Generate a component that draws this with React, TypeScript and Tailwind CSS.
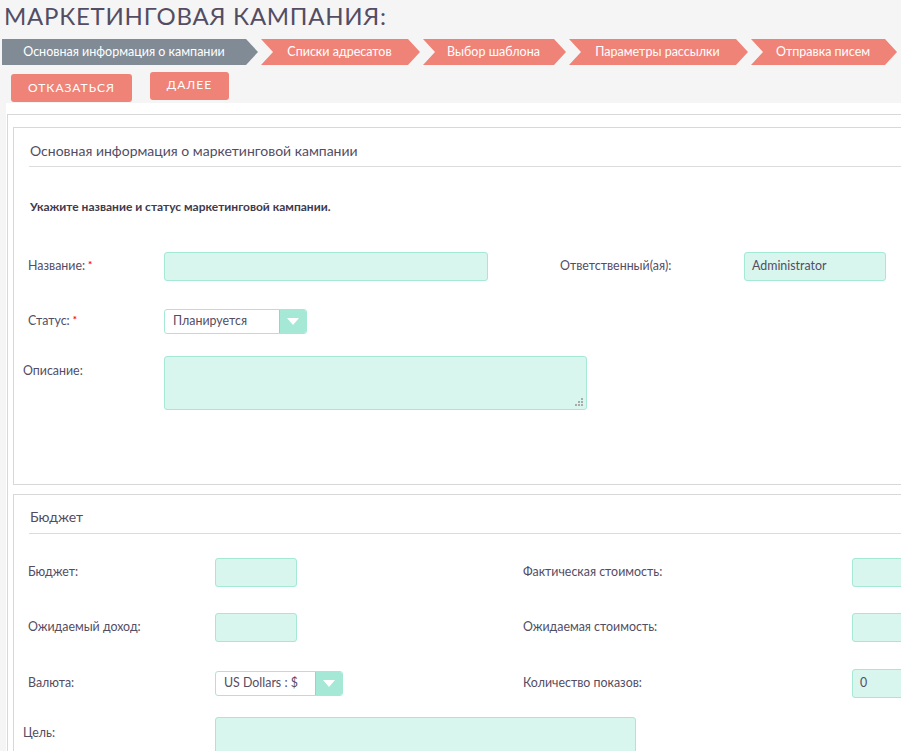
import React from 'react';

// шаги мастера кампании
const steps = [
  { label: 'Основная информация о кампании', w: 'w-[256px]', active: true },
  { label: 'Списки адресатов', w: 'w-[159px]' },
  { label: 'Выбор шаблона', w: 'w-[143px]' },
  { label: 'Параметры рассылки', w: 'w-[179px]' },
  { label: 'Отправка писем', w: 'w-[146px]' },
];

function Star() {
  return <span className="text-[#ff0000] text-[10px] align-top ml-[3px] font-bold">*</span>;
}

function Input({ w, value }: { w: string; value?: string }) {
  return (
    <div
      className={`${w} h-[29px] shrink-0 rounded-[3px] border border-[#a5e8d6] bg-[#d8f5ee] px-[7px] flex items-center text-[12.4px] text-[#534d64]`}
    >
      {value}
    </div>
  );
}

function Select({ w, value }: { w: string; value: string }) {
  return (
    <div className={`${w} h-[25px] shrink-0 flex rounded-[3px] border border-[#a5e8d6] bg-white overflow-hidden`}>
      <div className="flex-1 flex items-center pl-[8px] text-[12.4px] text-[#534d64]">{value}</div>
      <div className="w-[27px] bg-[#a5e8d6] border-l border-[#8fd9c4] flex items-center justify-center">
        <svg width="12" height="8" viewBox="0 0 12 8">
          <path d="M0 0 L12 0 L6 7 Z" fill="#fff" />
        </svg>
      </div>
    </div>
  );
}

function Textarea({ w, h }: { w: string; h: string }) {
  return (
    <div className={`${w} ${h} shrink-0 relative rounded-[3px] border border-[#a5e8d6] bg-[#d8f5ee]`}>
      <svg className="absolute right-[3px] bottom-[3px]" width="8" height="8" viewBox="0 0 8 8">
        <rect x="6" y="0" width="2" height="2" fill="#aaa" />
        <rect x="3" y="3" width="2" height="2" fill="#aaa" />
        <rect x="6" y="3" width="2" height="2" fill="#aaa" />
        <rect x="0" y="6" width="2" height="2" fill="#aaa" />
        <rect x="3" y="6" width="2" height="2" fill="#aaa" />
        <rect x="6" y="6" width="2" height="2" fill="#aaa" />
      </svg>
    </div>
  );
}

export default function App() {
  return (
    <div className="w-[901px] h-[751px] overflow-hidden bg-[#f5f5f5] font-['Lato','Noto_Sans',sans-serif] text-[#534d64]">
      {/* заголовок */}
      <h1 className="pl-[4px] pt-[2px] h-[39px] text-[24px] leading-[28px] tracking-[0.75px] font-normal uppercase text-[#534d64]">
        Маркетинговая кампания:
      </h1>

      {/* шаги */}
      <div className="flex gap-[3px] pl-[2px] h-[26px]">
        {steps.map((s, i) => (
          <div
            key={s.label}
            className={`${s.w} h-[26px] shrink-0 flex items-center justify-center text-[12.5px] text-white ${
              s.active ? 'bg-[#808b96] pr-[12px]' : 'bg-[#f08377] pl-[10px] pr-[12px]'
            } ${
              i === 0
                ? '[clip-path:polygon(0_0,calc(100%_-_12px)_0,100%_50%,calc(100%_-_12px)_100%,0_100%)]'
                : '[clip-path:polygon(0_0,calc(100%_-_12px)_0,100%_50%,calc(100%_-_12px)_100%,0_100%,12px_50%)]'
            }`}
          >
            {s.label}
          </div>
        ))}
      </div>

      {/* кнопки */}
      <div className="flex items-start h-[38px] pt-[7px] pl-[11px]">
        <button className="mt-[2px] w-[121px] h-[28px] rounded-[3px] bg-[#f08377] text-white text-[12px] tracking-[1px] uppercase">
          Отказаться
        </button>
        <button className="ml-[18px] w-[79px] h-[28px] rounded-[3px] bg-[#f08377] text-white text-[12px] tracking-[1px] uppercase pb-[2px]">
          Далее
        </button>
      </div>

      {/* содержимое */}
      <div className="ml-[6px] w-[1000px] bg-white pt-[11px] pl-[1px]">
        <div className="border-l border-t border-[#d8d8d8] pl-[5px] pt-[12px]">
          {/* панель 1 */}
          <div className="border border-[#d8d8d8] pl-[15px] h-[358px]">
            <div className="pl-[1px] pt-[13px] pb-[5px] border-b border-[#dcdcdc] text-[14px] leading-[20px]">
              Основная информация о маркетинговой кампании
            </div>
            <div className="pl-[1px] mt-[32px] text-[12px] leading-[16px] font-bold text-[#3f3a4d]">
              Укажите название и статус маркетинговой кампании.
            </div>

            <div className="mt-[37px] flex items-center text-[12.4px]">
              <div className="w-[136px] -ml-[1px]">
                Название:
                <Star />
              </div>
              <Input w="w-[324px]" />
              <div className="w-[72px]" />
              <div className="w-[184px]">Ответственный(ая):</div>
              <Input w="w-[142px]" value="Administrator" />
            </div>

            <div className="mt-[28px] flex items-center text-[12.4px]">
              <div className="w-[136px] -ml-[1px]">
                Статус:
                <Star />
              </div>
              <Select w="w-[143px]" value="Планируется" />
            </div>

            <div className="mt-[22px] flex items-start text-[12.4px]">
              <div className="w-[141px] -ml-[6px] pt-[6px]">Описание:</div>
              <Textarea w="w-[423px]" h="h-[54px]" />
            </div>
          </div>

          {/* панель 2 */}
          <div className="mt-[9px] border border-[#d8d8d8] pl-[15px] h-[400px]">
            <div className="pl-[1px] pt-[12px] pb-[6px] border-b border-[#dcdcdc] text-[14px] leading-[20px]">Бюджет</div>

            <div className="mt-[24px] flex items-center text-[12.4px]">
              <div className="w-[187px] -ml-[1px]">Бюджет:</div>
              <Input w="w-[82px]" />
              <div className="w-[226px]" />
              <div className="w-[329px]">Фактическая стоимость:</div>
              <Input w="w-[82px]" />
            </div>

            <div className="mt-[26px] flex items-center text-[12.4px]">
              <div className="w-[187px] -ml-[1px]">Ожидаемый доход:</div>
              <Input w="w-[82px]" />
              <div className="w-[226px]" />
              <div className="w-[329px]">Ожидаемая стоимость:</div>
              <Input w="w-[82px]" />
            </div>

            <div className="mt-[27px] flex items-center text-[12.4px]">
              <div className="w-[187px] -ml-[1px]">Валюта:</div>
              <Select w="w-[128px]" value="US Dollars : $" />
              <div className="w-[180px]" />
              <div className="w-[329px]">Количество показов:</div>
              <Input w="w-[82px]" value="0" />
            </div>

            <div className="mt-[19px] flex items-start text-[12.4px]">
              <div className="w-[192px] -ml-[6px] pt-[7px]">Цель:</div>
              <Textarea w="w-[421px]" h="h-[60px]" />
            </div>
          </div>
        </div>
      </div>
    </div>
  );
}
